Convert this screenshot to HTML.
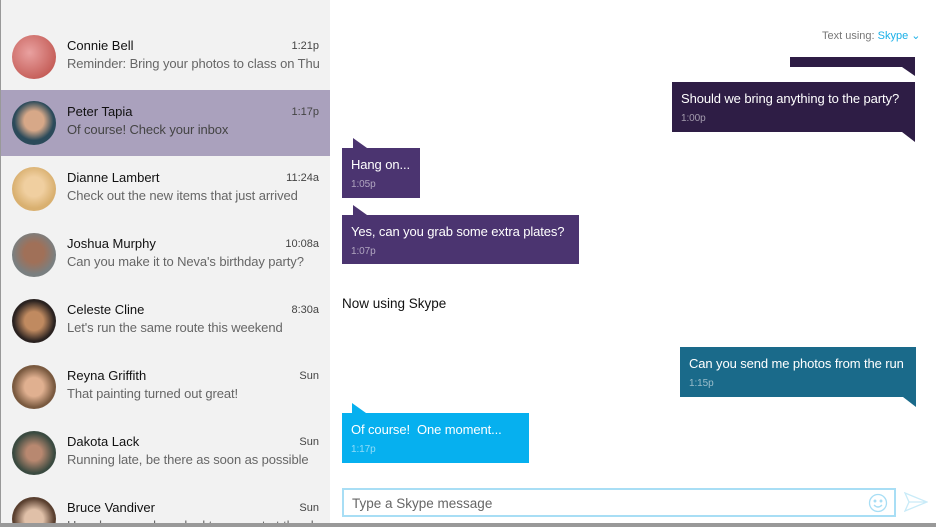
<!DOCTYPE html><html><head><style>
html,body{margin:0;width:936px;height:527px;overflow:hidden}
body{background:#fff;font-family:"Liberation Sans",sans-serif;position:relative}
.side{position:absolute;left:0;top:0;width:329px;height:527px;background:#f2f2f2;border-left:1px solid #999;overflow:hidden}
.row{position:absolute;left:0;width:329px;height:66px}
.row.sel{background:#aaa1bd}
.av{position:absolute;left:11px;top:11px;width:44px;height:44px;border-radius:50%}
.nm{position:absolute;left:66px;top:14px;font-size:13px;color:#111}
.tm{position:absolute;right:11px;top:16px;font-size:11px;color:#444}
.pv{position:absolute;left:66px;top:32px;font-size:13px;color:#666;white-space:nowrap;width:263px;overflow:hidden;letter-spacing:-0.1px}
.sel .pv{color:#444}
.b{position:absolute;color:#fff;font-size:13px;box-sizing:border-box;padding:9px 9px 0 9px;white-space:nowrap;overflow:hidden;letter-spacing:-0.1px}
.b small{display:block;font-size:10px;margin-top:7px;opacity:.55}
.tl{position:absolute;width:0;height:0}
</style></head><body>
<div class="side">
<div class="row" style="top:24px"><div class="av" style="background:radial-gradient(circle at 40% 40%,#e9a1a0,#b8463f)"></div><div class="nm">Connie Bell</div><div class="tm">1:21p</div><div class="pv">Reminder: Bring your photos to class on Thu</div></div>
<div class="row sel" style="top:90px"><div class="av" style="background:radial-gradient(circle at 50% 45%,#d7a888 30%,#2b4a5a 60%)"></div><div class="nm">Peter Tapia</div><div class="tm">1:17p</div><div class="pv">Of course! Check your inbox</div></div>
<div class="row" style="top:156px"><div class="av" style="background:radial-gradient(circle at 50% 45%,#f0cfa0 30%,#d9b070 65%)"></div><div class="nm">Dianne Lambert</div><div class="tm">11:24a</div><div class="pv">Check out the new items that just arrived</div></div>
<div class="row" style="top:222px"><div class="av" style="background:radial-gradient(circle at 50% 45%,#a07058 30%,#7a7f80 65%)"></div><div class="nm">Joshua Murphy</div><div class="tm">10:08a</div><div class="pv">Can you make it to Neva's birthday party?</div></div>
<div class="row" style="top:288px"><div class="av" style="background:radial-gradient(circle at 50% 50%,#c08a60 30%,#2a2220 65%)"></div><div class="nm">Celeste Cline</div><div class="tm">8:30a</div><div class="pv">Let's run the same route this weekend</div></div>
<div class="row" style="top:354px"><div class="av" style="background:radial-gradient(circle at 50% 50%,#e0b090 30%,#7a5a40 65%)"></div><div class="nm">Reyna Griffith</div><div class="tm">Sun</div><div class="pv">That painting turned out great!</div></div>
<div class="row" style="top:420px"><div class="av" style="background:radial-gradient(circle at 50% 50%,#b88870 25%,#3a4a40 65%)"></div><div class="nm">Dakota Lack</div><div class="tm">Sun</div><div class="pv">Running late, be there as soon as possible</div></div>
<div class="row" style="top:486px"><div class="av" style="background:radial-gradient(circle at 50% 50%,#e0c0a8 30%,#5a4030 65%)"></div><div class="nm">Bruce Vandiver</div><div class="tm">Sun</div><div class="pv">Heard we may be asked to present at the sh</div></div>
</div>
<div style="position:absolute;left:822px;top:29px;font-size:11px;color:#777">Text using: <span style="color:#1ab0e8">Skype ⌄</span></div>
<div class="b" style="left:790px;top:57px;width:125px;height:10px;background:#2e1d45;padding:0"></div>
<div class="tl" style="left:902px;top:67px;border-top:9px solid #2e1d45;border-left:13px solid transparent"></div>
<div class="b" style="left:672px;top:82px;width:243px;height:50px;background:#2e1d45">Should we bring anything to the party?<small>1:00p</small></div>
<div class="tl" style="left:902px;top:132px;border-top:10px solid #2e1d45;border-left:13px solid transparent"></div>
<div class="tl" style="left:353px;top:138px;border-bottom:10px solid #4b3470;border-right:14px solid transparent"></div>
<div class="b" style="left:342px;top:148px;width:78px;height:50px;background:#4b3470">Hang on...<small>1:05p</small></div>
<div class="tl" style="left:353px;top:205px;border-bottom:10px solid #4b3470;border-right:14px solid transparent"></div>
<div class="b" style="left:342px;top:215px;width:237px;height:49px;background:#4b3470">Yes, can you grab some extra plates?<small>1:07p</small></div>
<div style="position:absolute;left:342px;top:296px;font-size:13.5px;color:#111">Now using Skype</div>
<div class="b" style="left:680px;top:347px;width:236px;height:50px;background:#1a6a8a">Can you send me photos from the run<small>1:15p</small></div>
<div class="tl" style="left:903px;top:397px;border-top:10px solid #1a6a8a;border-left:13px solid transparent"></div>
<div class="tl" style="left:352px;top:403px;border-bottom:10px solid #06b0ef;border-right:14px solid transparent"></div>
<div class="b" style="left:342px;top:413px;width:187px;height:50px;background:#06b0ef">Of course!&nbsp; One moment...<small>1:17p</small></div>
<div style="position:absolute;left:342px;top:488px;width:554px;height:29px;box-sizing:border-box;border:2px solid #a8def5;background:#fff"><span style="position:absolute;left:8px;top:6px;font-size:13.5px;color:#666">Type a Skype message</span>
<svg style="position:absolute;right:6px;top:3px" width="20" height="20" viewBox="0 0 20 20" fill="none" stroke="#a8def5" stroke-width="1.3"><circle cx="10" cy="10" r="8.5"/><circle cx="7" cy="8" r=".8"/><circle cx="13" cy="8" r=".8"/><path d="M6 12q4 4 8 0"/></svg></div>
<svg style="position:absolute;left:904px;top:492px" width="24" height="20" viewBox="0 0 24 20" fill="none" stroke="#c9ebf8" stroke-width="1.3"><path d="M1 1L23 10L1 19L5 10Z M5 10H23"/></svg>
<div style="position:absolute;left:0;top:523px;width:936px;height:4px;background:#999"></div>
</body></html>
